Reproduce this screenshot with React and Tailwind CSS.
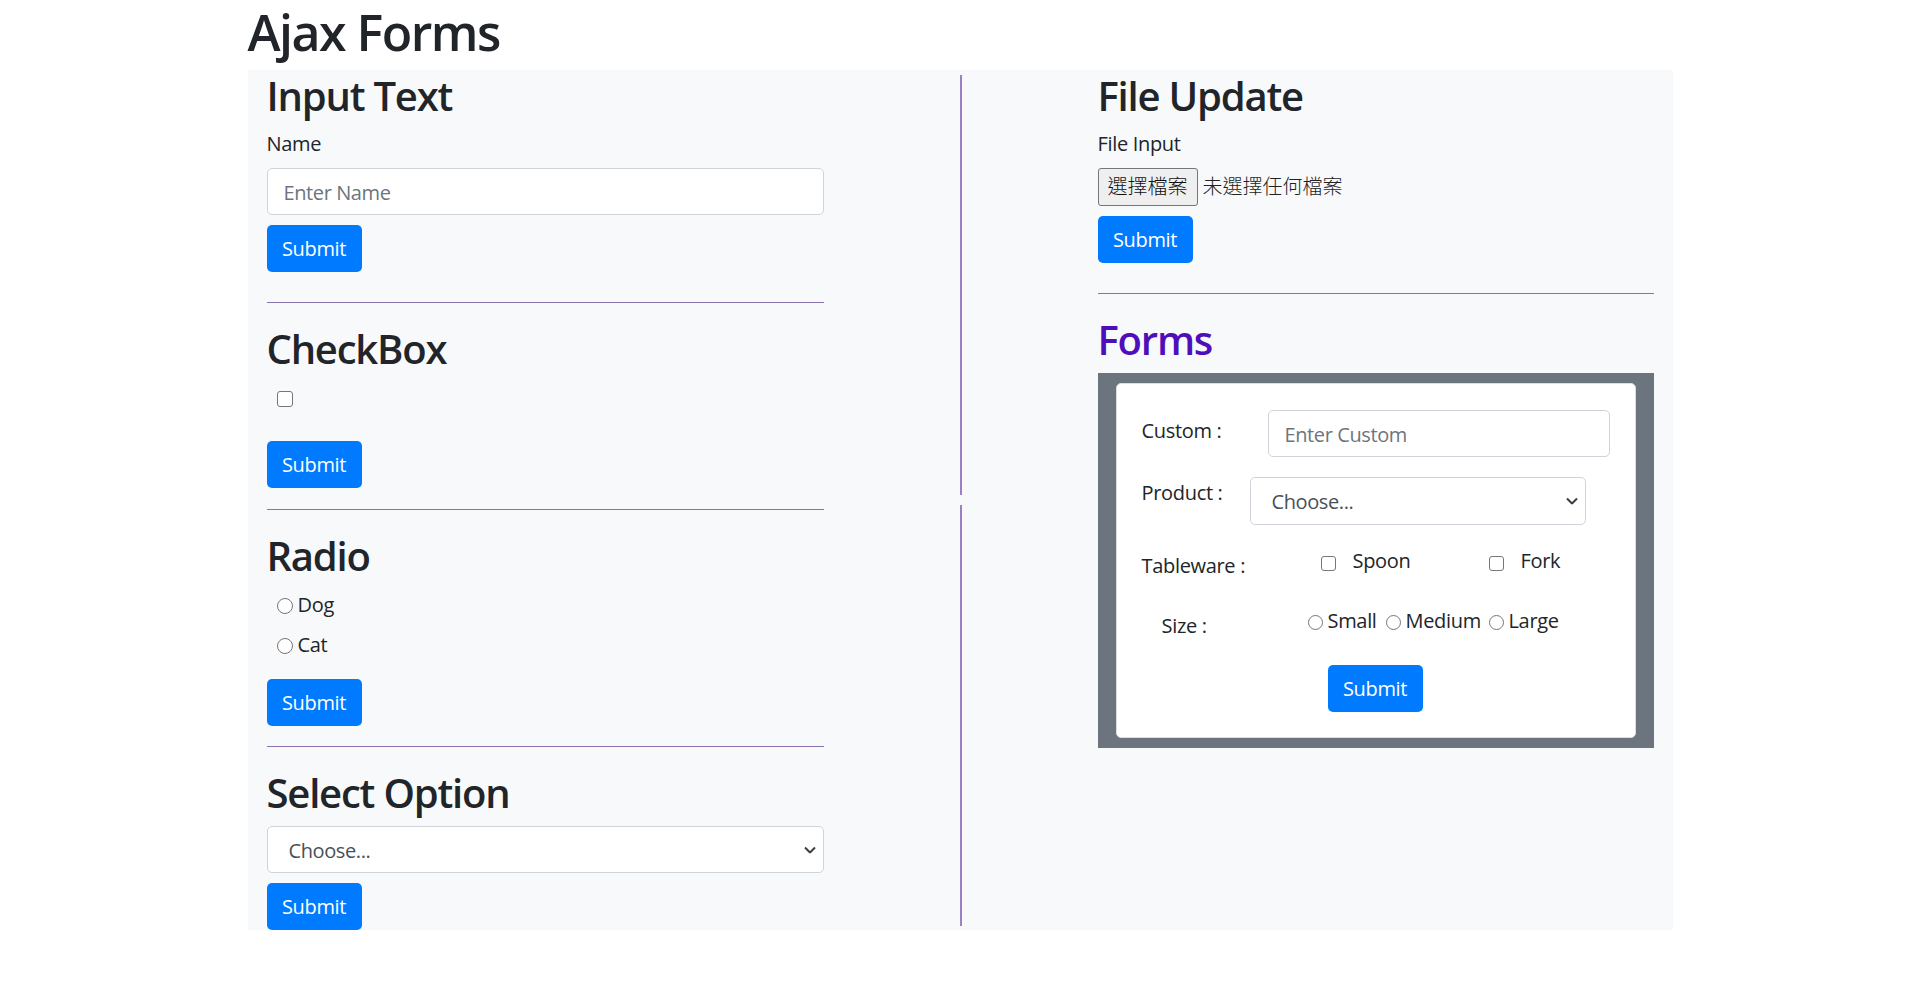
import React from 'react';

const font = { fontFamily: '"Open Sans", "Noto Sans CJK TC", sans-serif' };

function SubmitBtn({ className = '' }) {
  return (
    <button
      type="button"
      className={`block w-[95px] h-[47px] rounded-[5px] bg-[#007bff] text-white text-[20px] leading-[30px] text-center pt-[1px] ${className}`}
    >
      Submit
    </button>
  );
}

function Check({ size = 'w-[16px] h-[16px]', className = '' }) {
  return (
    <input
      type="checkbox"
      className={`appearance-none block m-0 shrink-0 bg-white border border-[#767676] rounded-[3px] ${size} ${className}`}
    />
  );
}

function Radio({ name, size = 'w-[16px] h-[16px]', className = '' }) {
  return (
    <input
      type="radio"
      name={name}
      className={`appearance-none block m-0 shrink-0 bg-white border border-[#767676] rounded-full ${size} ${className}`}
    />
  );
}

function Chevron() {
  return (
    <svg className="absolute right-[7px] top-1/2 -translate-y-1/2" width="12" height="7" viewBox="0 0 12 7">
      <polyline points="1,1 6,6 11,1" fill="none" stroke="#3a3f44" strokeWidth="2" />
    </svg>
  );
}

function SelectBox({ className = '' }) {
  return (
    <div className={`relative h-[47px] bg-white border border-[#ced4da] rounded-[5px] ${className}`}>
      <select className="appearance-none w-full h-full bg-transparent pl-[21px] pr-[30px] pt-[2px] text-[20px] text-[#495057] tracking-[-0.02em] outline-none">
        <option>Choose...</option>
      </select>
      <Chevron />
    </div>
  );
}

function TextInput({ placeholder, className = '' }) {
  return (
    <input
      type="text"
      placeholder={placeholder}
      className={`block h-[47px] bg-white border border-[#ced4da] rounded-[5px] px-[16px] pt-[2px] text-[20px] text-[#495057] tracking-[-0.02em] placeholder:text-[#6c757d] outline-none ${className}`}
    />
  );
}

function Heading({ children, className = '' }) {
  return (
    <h2 className={`text-[40px] leading-[48px] font-[550] tracking-[-0.03em] pt-[2px] mb-[8px] ${className}`}>
      {children}
    </h2>
  );
}

function Rule({ className = '' }) {
  return <div className={`h-[1px] bg-[#8a72ad] ${className}`} />;
}

function LeftColumn() {
  return (
    <div className="w-[557px] shrink-0">
      <Heading>Input Text</Heading>
      <label className="block text-[20px] leading-[30px] pt-[1px] mb-[9px]">Name</label>
      <TextInput placeholder="Enter Name" className="w-full" />
      <SubmitBtn className="mt-[10px]" />
      <Rule className="mt-[30px] mb-[20px]" />

      <Heading>CheckBox</Heading>
      <div className="h-[30px] pl-[10px] pt-[10px]">
        <Check />
      </div>
      <SubmitBtn className="mt-[30px]" />
      <Rule className="mt-[21px] mb-[20px]" />

      <Heading>Radio</Heading>
      <div className="flex flex-col gap-[10px] pl-[10px] pt-[2px]">
        {['Dog', 'Cat'].map(a => (
          <label key={a} className="flex items-center gap-[5px] h-[30px] text-[20px] leading-[30px]">
            <Radio name="pet" className="mt-[2px]" />
            {a}
          </label>
        ))}
      </div>
      <SubmitBtn className="mt-[19px]" />
      <Rule className="mt-[20px] mb-[20px]" />

      <Heading className="mb-[9px]">Select Option</Heading>
      <SelectBox className="w-full" />
      <SubmitBtn className="mt-[10px]" />
    </div>
  );
}

function FormsCard() {
  return (
    <div className="bg-[#6c757d] px-[18px] py-[10px]">
      <div className="bg-white border border-[#dcdee0] rounded-[5px] p-[25px] text-[20px] leading-[30px]">
        <div className="flex h-[48px]">
          <div className="w-[126px] shrink-0 pt-[7px]">Custom :</div>
          <TextInput placeholder="Enter Custom" className="mt-[1px] flex-1 min-w-0" />
        </div>

        <div className="flex h-[48px] mt-[20px]">
          <div className="w-[108px] shrink-0 pt-[1px]">Product :</div>
          <SelectBox className="w-[336px] h-[48px]" />
        </div>

        <div className="flex h-[35px] mt-[20px]">
          <div className="w-[179px] shrink-0 mt-[6px]">Tableware :</div>
          <label className="flex w-[168px] shrink-0">
            <Check size="w-[15px] h-[15px]" className="mt-[11px]" />
            <span className="ml-[17px] pt-[1px]">Spoon</span>
          </label>
          <label className="flex">
            <Check size="w-[15px] h-[15px]" className="mt-[11px]" />
            <span className="ml-[17px] pt-[1px]">Fork</span>
          </label>
        </div>

        <div className="flex h-[35px] mt-[25px]">
          <div className="w-[166px] shrink-0 pl-[20px] mt-[6px]">Size :</div>
          {[['Small', 'w-[78px]'], ['Medium', 'w-[103px]'], ['Large', '']].map(([s, w]) => (
            <label key={s} className={`flex shrink-0 ${w}`}>
              <Radio name="size" size="w-[15px] h-[15px]" className="mt-[10px]" />
              <span className="ml-[5px] pt-[1px]">{s}</span>
            </label>
          ))}
        </div>

        <SubmitBtn className="mt-[25px] ml-[186px]" />
      </div>
    </div>
  );
}

function RightColumn() {
  return (
    <div className="w-[556px] shrink-0">
      <Heading>File Update</Heading>
      <label className="block text-[20px] leading-[30px] pt-[1px] mb-[9px]">File Input</label>
      <div className="flex items-center h-[38px] text-[20px] font-light tracking-normal">
        <button type="button" className="h-[38px] w-[100px] bg-[#efefef] border border-[#767676] rounded-[3px] text-[#111]">
          選擇檔案
        </button>
        <span className="ml-[5px] text-[#222]">未選擇任何檔案</span>
      </div>
      <SubmitBtn className="mt-[10px]" />
      <Rule className="mt-[30px] mb-[20px]" />
      <Heading className="text-[#4e0fbb] mb-[9px]">Forms</Heading>
      <FormsCard />
    </div>
  );
}

export default function App() {
  return (
    <div className="min-h-[990px] bg-white text-[#212529] tracking-[-0.02em]" style={font}>
      <div className="w-[1425px] mx-auto">
        <h1 className="text-[50px] leading-[60px] font-[550] tracking-[-0.03em] pt-[2px] mb-[8px]">Ajax Forms</h1>
        <div className="flex bg-[#f8f9fa] px-[19px]">
          <LeftColumn />
          <div className="flex-1 flex flex-col items-center pt-[5px]">
            <div className="w-[2px] h-[420px] bg-[#9b80c3]" />
            <div className="w-[2px] h-[421px] mt-[10px] bg-[#9b80c3]" />
          </div>
          <RightColumn />
        </div>
      </div>
    </div>
  );
}
